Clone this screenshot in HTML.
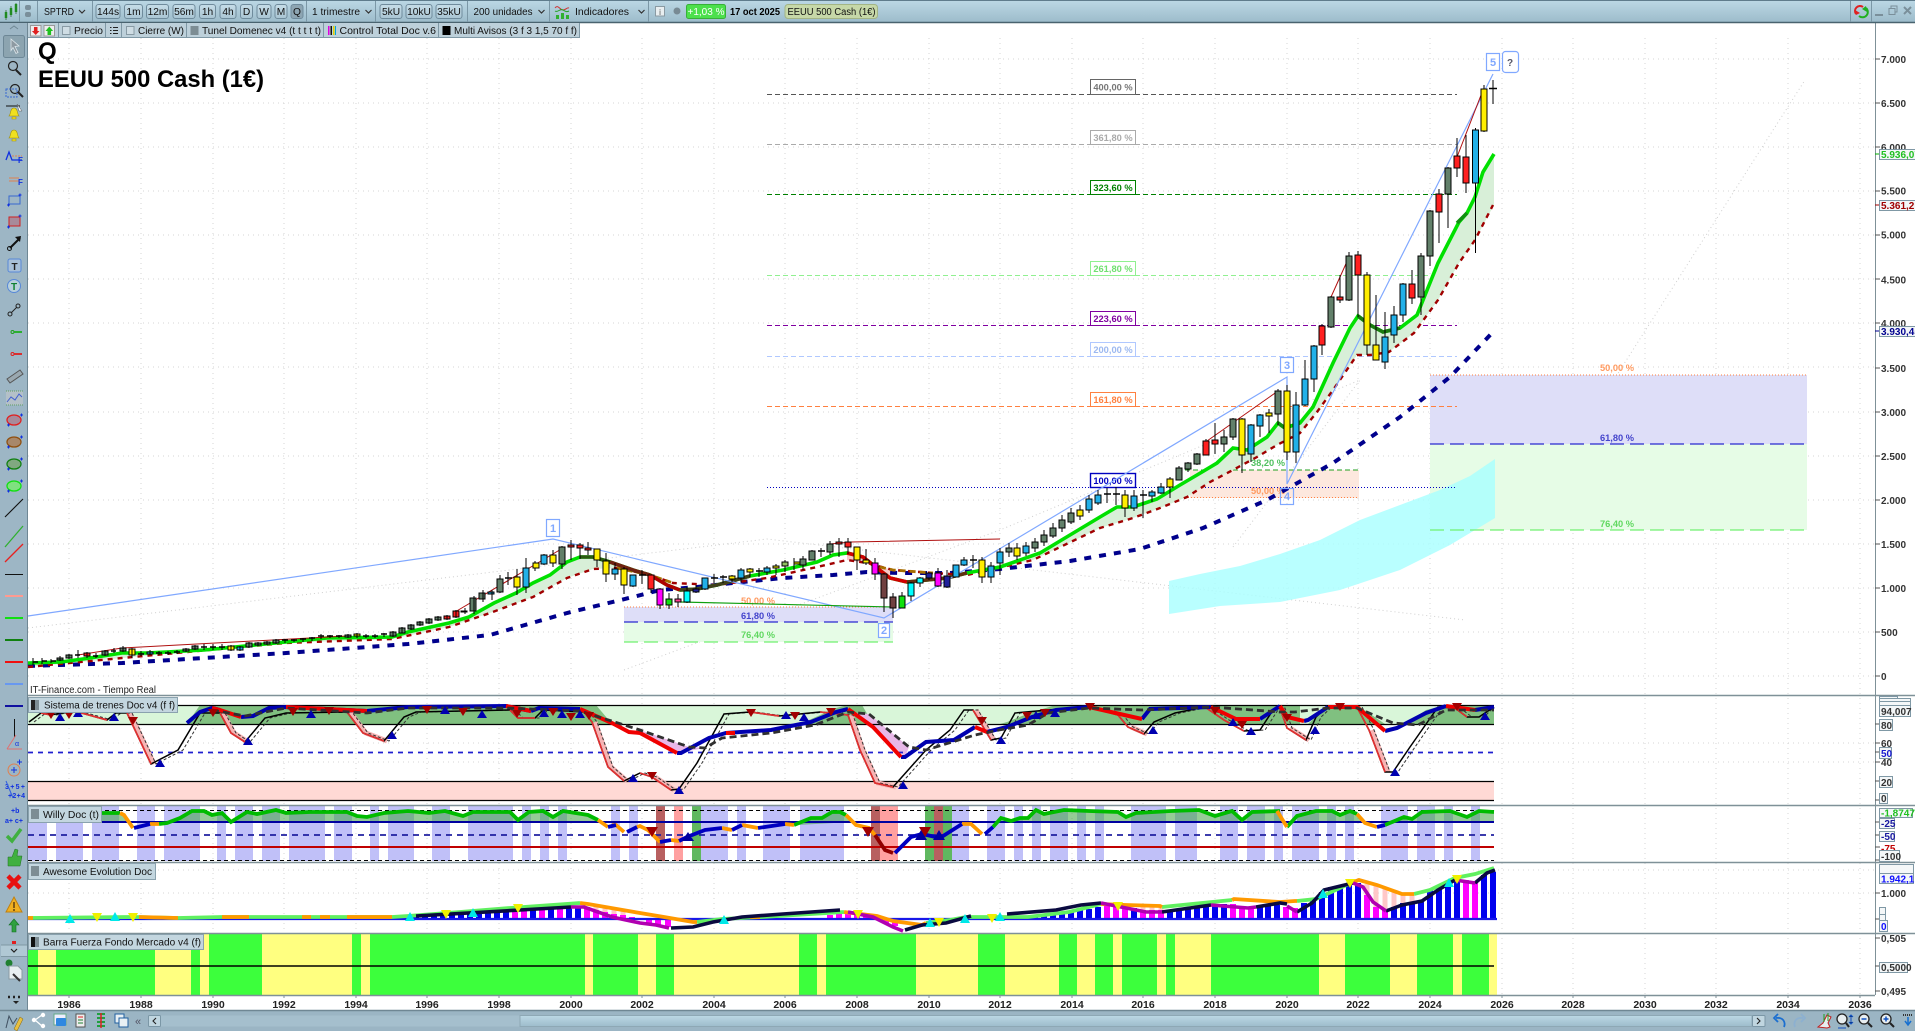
<!DOCTYPE html>
<html><head><meta charset="utf-8"><title>EEUU 500 Cash</title>
<style>
html,body{margin:0;padding:0;background:#fff;width:1915px;height:1031px;overflow:hidden}
svg{display:block;font-family:"Liberation Sans",Arial,sans-serif}
.tb{font-size:10.2px;fill:#111}
.ax{font-size:10px;font-weight:bold;fill:#333}
.yr{font-size:10.5px;font-weight:bold;fill:#222;text-anchor:middle}
.fl{font-size:9.3px;font-weight:bold;text-anchor:middle}
</style></head><body>
<svg width="1915" height="1031" viewBox="0 0 1915 1031" xmlns="http://www.w3.org/2000/svg">
<defs>
<linearGradient id="bar" x1="0" y1="0" x2="0" y2="1"><stop offset="0" stop-color="#bcd8e5"/><stop offset="1" stop-color="#9dbccb"/></linearGradient>
<linearGradient id="btn" x1="0" y1="0" x2="0" y2="1"><stop offset="0" stop-color="#c6dde8"/><stop offset="1" stop-color="#a9c5d3"/></linearGradient>
</defs>
<rect width="1915" height="1031" fill="#fff"/>

<!-- grid -->
<path d="M28 59H1875M28 103H1875M28 147H1875M28 191H1875M28 235H1875M28 279H1875M28 323H1875M28 367H1875M28 412H1875M28 456H1875M28 500H1875M28 544H1875M28 588H1875M28 632H1875M28 676H1875M28 743H1875M28 762H1875M28 870H1875M28 893H1875" stroke="#d4d4d4" stroke-dasharray="1 4" fill="none"/>
<path d="M69 38V995M141 38V995M213 38V995M284 38V995M356 38V995M427 38V995M499 38V995M571 38V995M642 38V995M714 38V995M785 38V995M857 38V995M929 38V995M1000 38V995M1072 38V995M1143 38V995M1215 38V995M1287 38V995M1358 38V995M1430 38V995M1502 38V995M1573 38V995M1645 38V995M1716 38V995M1788 38V995M1860 38V995" stroke="#d4d4d4" stroke-dasharray="1 4" fill="none"/>

<!-- faint dotted trend lines -->
<path d="M28 628L767 539L1465 620M624 670L1000 530L1360 380M1233 547L1360 380M1601 400L1805 80" stroke="#cfcfcf" stroke-dasharray="1 3" fill="none"/>

<!-- right fib zones -->
<rect x="1430" y="375" width="377" height="69" fill="#dedef8"/>
<rect x="1430" y="444" width="377" height="86" fill="#e6fce6"/>
<path d="M1169 581L1200 574 1240 566 1280 554 1320 540 1360 520 1400 505 1440 490 1470 476 1495 459V518L1450 545 1400 570 1370 580 1340 590 1280 602 1220 606 1169 614Z" fill="#a8ffff" opacity=".8"/>
<path d="M1430 375H1807" stroke="#ff8040" stroke-dasharray="1 2"/>
<path d="M1430 444H1807" stroke="#2a2ad0" stroke-width="1.300" stroke-dasharray="14 6"/>
<path d="M1430 530H1807" stroke="#70f070" stroke-width="1.300" stroke-dasharray="14 6"/>
<text x="1617" y="371" class="fl" fill="#ff9a60">50,00 %</text>
<text x="1617" y="441" class="fl" fill="#4444cc">61,80 %</text>
<text x="1617" y="527" class="fl" fill="#60d860">76,40 %</text>

<!-- middle small fib zones -->
<rect x="624" y="607" width="269" height="15" fill="#dedef8"/>
<rect x="624" y="622" width="269" height="20" fill="#e6fce6"/>
<path d="M624 607H893" stroke="#ff8040" stroke-dasharray="1 2"/>
<path d="M624 622H893" stroke="#2a2ad0" stroke-width="1.200" stroke-dasharray="14 6"/>
<path d="M624 642H893" stroke="#70f070" stroke-width="1.200" stroke-dasharray="14 6"/>
<text x="758" y="604" class="fl" fill="#ff9a60">50,00 %</text>
<text x="758" y="619" class="fl" fill="#4444cc">61,80 %</text>
<text x="758" y="638" class="fl" fill="#60d860">76,40 %</text>
<rect x="1190" y="470" width="169" height="28" fill="#fde8de"/>
<path d="M1185 470H1359" stroke="#20a020" stroke-dasharray="5 3"/>
<path d="M1185 497.500H1359" stroke="#ff8040" stroke-dasharray="1 2"/>
<text x="1268" y="466" class="fl" fill="#50c060">38,20 %</text>
<text x="1268" y="494" class="fl" fill="#ff9a60">50,00 %</text>

<!-- fib lines -->
<path d="M767 94.500H1457" stroke="#555" stroke-dasharray="5 3"/>
<path d="M767 144.500H1457" stroke="#aaa" stroke-dasharray="5 3"/>
<path d="M767 194.500H1457" stroke="#008000" stroke-dasharray="5 3"/>
<path d="M767 275.500H1457" stroke="#90f090" stroke-dasharray="5 3"/>
<path d="M767 325.500H1457" stroke="#8000a0" stroke-dasharray="5 3"/>
<path d="M767 356.500H1457" stroke="#b0c8ff" stroke-dasharray="5 3"/>
<path d="M767 406.500H1457" stroke="#ff8040" stroke-dasharray="5 3"/>
<path d="M767 487.500H1457" stroke="#0000c0" stroke-dasharray="1 2"/>
<g fill="#fff" stroke-width="1">
<rect x="1090.500" y="79.500" width="45" height="15" stroke="#666"/>
<rect x="1090.500" y="130.500" width="45" height="14" stroke="#aaa"/>
<rect x="1090.500" y="180.500" width="45" height="14" stroke="#008000"/>
<rect x="1090.500" y="261.500" width="45" height="14" stroke="#90f090"/>
<rect x="1090.500" y="311.500" width="45" height="14" stroke="#8000a0"/>
<rect x="1090.500" y="342.500" width="45" height="14" stroke="#b0c8ff"/>
<rect x="1090.500" y="392.500" width="45" height="14" stroke="#ff8040"/>
<rect x="1090.500" y="473.500" width="45" height="14" stroke="#0000c0" stroke-width="1.400"/>
</g>
<text x="1113" y="90.500" class="fl" fill="#777">400,00 %</text>
<text x="1113" y="141" class="fl" fill="#aaa">361,80 %</text>
<text x="1113" y="191" class="fl" fill="#008000">323,60 %</text>
<text x="1113" y="272" class="fl" fill="#70e070">261,80 %</text>
<text x="1113" y="322" class="fl" fill="#8000a0">223,60 %</text>
<text x="1113" y="353" class="fl" fill="#9cb8f0">200,00 %</text>
<text x="1113" y="403" class="fl" fill="#ff8040">161,80 %</text>
<text x="1113" y="484" class="fl" fill="#0000c0">100,00 %</text>

<!-- band fill + MAs below candles -->
<path d="M28 663L61 662 90 658 122 653 147 653 204 650 286 642 327 638 392 637 408 632 449 623 469 617 494 603 516 593 533 583 550 575 567 562 580 557 593 557 610 562 617 568 593 569 567 578 533 597 490 613 449 627 392 639 286 643 122 658 28 667Z" fill="#d8efd8"/>
<path d="M847 553L863 557 877 568 890 578 893 570 867 563 847 560Z" fill="#f8c8c8"/>
<path d="M960 575L1000 567 1040 553 1070 535 1100 517 1117 507 1133 507 1157 499 1180 485 1197 475 1217 463 1233 448 1247 450 1267 437 1278 423 1285 428 1300 423 1313 407 1333 363 1350 328 1358 316 1370 325 1383 332 1400 328 1417 315 1438 263 1459 222 1467 213 1475 197 1483 172 1494 154V205L1475 240 1459 263 1438 300 1414 333 1389 352 1370 355 1357 355 1333 390 1317 412 1300 433 1277 445 1257 457 1233 470 1210 482 1187 497 1160 508 1133 518 1100 528 1033 560 967 575Z" fill="#d8efd8"/>

<!-- navy dashed MA -->
<path d="M28 666L122 663 286 653 408 644 490 635 567 613 633 597 660 590 697 587 733 583 783 578 833 575 867 572 900 573 950 573 1000 569 1070 561 1140 549 1203 528 1267 500 1333 463 1400 417 1450 377 1493 332" fill="none" stroke="#00008c" stroke-width="4" stroke-dasharray="7 8"/>
<!-- lower dashed -->
<path d="M28 667L122 658 286 643 392 639 449 627 490 613 533 597 567 578 593 569 617 568 650 575 673 583 717 585 767 578 817 567 847 560 867 563 893 570 933 573 967 575 1033 560 1100 528 1133 518 1160 508 1187 497 1210 482 1233 470 1257 457 1277 445 1300 433 1317 412 1333 390 1357 355 1370 355 1389 352 1414 333 1438 300 1459 263 1475 240 1493 205" fill="none" stroke="#a00000" stroke-width="2.400" stroke-dasharray="5 5"/>
<path d="M617 568L650 575 673 583M880 567L893 570 933 573" fill="none" stroke="#a87000" stroke-width="2.800" stroke-dasharray="6 4"/>
<!-- main green MA -->
<path d="M28 663L61 662 90 658 122 653 147 653 204 650 286 642 327 638 392 637 408 632 449 623 469 617 494 603 516 593 533 583 550 575 567 562 580 557 593 557 610 562 633 570 650 575 667 585 680 590 697 589 717 585 750 576 783 570 817 562 833 555 847 553 863 557 877 568 890 578 907 582 927 580 947 578 967 573 983 570 1000 567 1040 553 1070 535 1100 517 1117 507 1133 507 1157 499 1180 485 1197 475 1217 463 1233 448 1247 450 1267 437 1278 423 1285 428 1300 423 1313 407 1333 363 1350 328 1358 316 1370 325 1383 332 1400 328 1417 315 1438 263 1459 222 1467 213 1475 197 1483 172 1494 154" fill="none" stroke="#00e000" stroke-width="3.600"/>
<path d="M580 557L593 557 610 562" fill="none" stroke="#2a5a10" stroke-width="3.600"/>
<path d="M610 562L633 570 650 575" fill="none" stroke="#702010" stroke-width="3.600"/>
<path d="M650 575L667 585 680 590" fill="none" stroke="#b00000" stroke-width="3.600"/>
<path d="M680 590L697 589 717 585 750 576" fill="none" stroke="#40401a" stroke-width="3.600"/>
<path d="M847 553L863 557 877 568 890 578 907 582" fill="none" stroke="#d00000" stroke-width="3.600"/>
<path d="M907 582L927 580 947 578 967 573" fill="none" stroke="#603010" stroke-width="3.600"/>
<path d="M1358 316L1370 325 1383 332 1400 328" fill="none" stroke="#1a7a10" stroke-width="3.600"/>
<path d="M1278 423L1285 428M1457 223L1467 213" fill="none" stroke="#109010" stroke-width="3.600"/>

<!-- waves -->
<path d="M28 616L553 539 884 618 1287 377V484L1493 74" fill="none" stroke="#80a8ff" stroke-width="1.200"/>
<!-- red/green swing -->
<path d="M78 655L122 648 347 636M455 612L563 548M830 544L851 542 1000 539M1207 441L1278 391M1331 297L1349 257M1457 157L1483 90" fill="none" stroke="#b01010" stroke-width="1"/>
<path d="M680 602L893 607" fill="none" stroke="#10a010" stroke-width="1.200"/>

<!-- wicks -->
<path d="M1493 80V104M1484 85V132M1475.500 128V253M1466 135V193M1457 138V177M1448 167V228M1439 189V243M1430 210V266M1421 253V315M1412 270V304M1403 283V322M1394 306V343M1385 312V369M1376 295V360M1367 272V355M1358 251V317M1349 252V301M1340 275V303M1331 296V328M1322 324V355M1314 345V392M1305 360V406M1296 392V463M1287 385V460M1278 389V425M1269 409V433M1260 414V437M1251 424V462M1242 418V473M1233 418V440M1224 430V452M1215 423V454M1206 439V455M1197 453V465M1188 462V472M1179 466V480M1170 477V498M1161 483V494M1152 490V502M1143 490V518M1134 490V511M1125 490V517M1116 487V505M1107 488V503M1098 490V505M1089 495V513M1080 505V520M1071 508V524M1062 515V532M1053 523V538M1044 530V546M1035 538V552M1026 542V556M1017 543V560M1009 543V557M1000 548V575M991 562V583M982 557V583M973 555V568M964 557V566M956 565V577M947 570V588M938 568V587M929 573V580M920 577V587M911 582V601M902 592V608M893 593V618M884 573V612M875 558V580M866 549V565M857 547V570M848 538V554M839 538V557M830 541V555M821 548V557M812 550V560M803 556V570M794 558V570M785 560V572M776 564V575M767 566V575M759 568V577M750 568V577M741 568V582M732 575V582M723 575V583M714 574V583M705 578V590M696 585V593M687 587V603M678 594V607M669 593V609M660 588V609M651 575V593M642 570V584M633 575V587M624 567V594M615 563V580M606 553V582M597 549V567M588 542V555M580 543V559M571 540V560M562 546V569M553 550V567M544 554V565M535 561V571M526 558V593M517 569V595M508 572V585M500 575V593" stroke="#000" fill="none"/>

<!-- bodies -->
<g stroke="#000" stroke-width="1">
<path fill="#ffee00" d="M1481 89h6v42h-6zM1373 345h6v15h-6zM1364 275h6v70h-6zM1284 391h6v61h-6zM1266 413h6v3h-6zM1239 419h6v36h-6zM1167 479h6v8h-6zM1122 495h6v13h-6zM1077 510h6v6h-6zM1014 548h6v8h-6zM979 560h6v17h-6zM854 547h6v13h-6zM863 560h6v3h-6zM794 562h6v2h-6zM773 566h6v2h-6zM747 569h6v3h-6zM729 576h6v3h-6zM621 569h6v16h-6zM603 561h6v13h-6zM594 549h6v11h-6zM550 555h6v8h-6zM514 577h6v10h-6zM533 563h6v5h-6z"/>
<path fill="#22b0e8" d="M1472.500 130h6v53h-6zM1400 284h6v31h-6zM1391 315h6v20h-6zM1382 337h6v25h-6zM1311 346h6v33h-6zM1302 379h6v26h-6zM1293 405h6v47h-6zM1257 415h6v11h-6zM1248 425h6v29h-6zM1158 487h6v6h-6zM1149 492h6v4h-6zM1131 496h6v12h-6zM1095 495h6v8h-6zM1086 499h6v11h-6zM1023 546h6v7h-6zM997 552h6v11h-6zM988 566h6v11h-6zM961 560h6v5h-6zM953 565h6v12h-6zM764 568h6v4h-6zM738 570h6v8h-6zM702 578h6v11h-6zM630 575h6v11h-6zM612 569h6v5h-6zM541 555h6v9h-6zM523 568h6v19h-6z"/>
<path fill="#ff2020" d="M1463 157h6v26h-6zM1454 156h6v12h-6zM1436 194h6v18h-6zM1409 284h6v14h-6zM1355 255h6v20h-6zM1337 297h6v3h-6zM1319 326h6v19h-6zM1212 440h6v4h-6zM1203 441h6v14h-6zM845 542h6v5h-6zM836 542h6v2h-6zM648 575h6v14h-6zM585 548h6v2h-6zM577 545h6v3h-6zM568 545h6v2h-6z"/>
<path fill="#62806a" d="M1445 168h6v26h-6zM1427 211h6v45h-6zM1418 256h6v41h-6zM1346 256h6v44h-6zM1328 297h6v30h-6zM1275 391h6v23h-6zM1230 419h6v18h-6zM1221 437h6v7h-6zM1194 454h6v10h-6zM1185 463h6v6h-6zM1176 468h6v12h-6zM1068 513h6v9h-6zM1059 520h6v8h-6zM1050 528h6v8h-6zM1041 535h6v7h-6zM1032 542h6v6h-6zM1006 548h6v4h-6zM827 544h6v8h-6zM809 551h6v9h-6zM800 559h6v6h-6zM559 547h6v17h-6zM497 579h6v13h-6z"/>
<path fill="#ff00ff" d="M657 589h6v16h-6zM872 563h6v11h-6zM935 573h6v13h-6z"/>
<path fill="#ff4090" d="M675 599h6v3h-6z"/>
<path fill="#10e010" d="M666 599h6v6h-6zM899 596h6v12h-6z"/>
<path fill="#90c060" d="M782 562h6v4h-6z"/>
<path fill="#00ffff" d="M684 591h6v11h-6zM908 583h6v13h-6zM917 578h6v5h-6z"/>
<path fill="#20209a" d="M693 589h6v3h-6zM926 573h6v5h-6zM944 576h6v11h-6z"/>
<path fill="#704040" d="M881 574h6v24h-6zM890 597h6v11h-6z"/>
<!-- early small candles -->
<path fill="#62806a" d="M66 655h6v3h-6zM57 658h6v2h-6zM102 651h6v4h-6zM120 648h6v3h-6zM183 649h6v2h-6zM192 646h6v3h-6zM246 643h6v4h-6zM255 643h6v2h-6zM264 642h6v2h-6zM273 640h6v3h-6zM345 635h6v2h-6zM390 632h6v4h-6zM399 628h6v5h-6zM408 625h6v4h-6zM417 622h6v3h-6zM426 619h6v4h-6zM435 617h6v3h-6zM461 611h6v1h-6zM470 598h6v13h-6zM479 593h6v6h-6z"/>
<path fill="#ff2020" d="M84 653h6v3h-6zM453 611h6v6h-6zM444 616h6v3h-6z"/>
<path fill="#ffee00" d="M129 649h6v6h-6zM228 646h6v4h-6zM354 634h6v2h-6z"/>
<path fill="#22b0e8" d="M147 652h6v2h-6zM237 647h6v3h-6zM488 592h6v2h-6z"/>
</g>
<path d="M33 662h5M42 661h5M51 661h5M75 655h5M93 656h5M111 651h5M138 654h6M156 653h6M165 653h6M174 652h6M201 647h6M210 647h6M219 647h6M282 640h6M291 640h6M300 639h6M309 638h6M318 636h6M327 636h6M336 636h6M363 636h6M372 636h6M381 634h6M1140 495h7M1113 494h7M1104 494h7M1489 88.500h8M970 560h7M818 551h7M756 571h7M711 578h7M720 577h7M639 575h7M505 578h7" stroke="#000" stroke-width="1.600" fill="none"/>
<path d="M33 658V665M42 658V664M51 659V663M60 656V661M69 654V659M78 650V658M87 652V658M96 653V658M105 650V656M114 648V653M123 646V652M132 648V658M141 651V656M150 650V655M159 651V655M168 651V655M177 650V654M186 648V652M195 645V650M204 644V650M213 644V650M222 644V650M231 645V651M240 646V651M249 642V648M258 642V646M267 641V645M276 639V644M285 639V643M294 639V642M303 638V642M312 637V641M321 634V639M330 635V638M339 635V638M348 634V638M357 633V638M366 634V638M375 634V638M384 633V637M393 631V637M402 627V633M411 624V630M420 621V626M429 618V624M438 616V621M447 615V620M456 610V618M465 608V614M474 596V614M483 590V602M492 590V600" stroke="#000" fill="none"/>

<!-- wave labels -->
<g fill="#fff" stroke="#80a8ff" stroke-width="1.200">
<rect x="546.500" y="519.500" width="13" height="17"/><rect x="878.500" y="623.500" width="11" height="14"/><rect x="1280.500" y="357.500" width="13" height="15"/><rect x="1280.500" y="488.500" width="13" height="16" fill="none"/><rect x="1486.500" y="53.500" width="13" height="17"/><rect x="1502.500" y="51.500" width="16" height="21" rx="3"/>
</g>
<g font-size="11" font-weight="bold" fill="#80a8ff" text-anchor="middle">
<text x="553" y="532">1</text><text x="884" y="634">2</text><text x="1287" y="369">3</text><text x="1287" y="500">4</text><text x="1493" y="66">5</text></g>
<text x="1510" y="66" font-size="10" font-weight="bold" fill="#556" text-anchor="middle">?</text>

<!-- title -->
<text x="38" y="59" font-size="24" font-weight="bold" fill="#000">Q</text>
<text x="38" y="87" font-size="24" font-weight="bold" fill="#000" textLength="226" lengthAdjust="spacingAndGlyphs">EEUU 500 Cash (1€)</text>
<text x="30" y="693" font-size="10" fill="#222" textLength="126" lengthAdjust="spacingAndGlyphs">IT-Finance.com - Tiempo Real</text>

<!-- SISTEMA panel -->
<rect x="28" y="705" width="1466" height="19" fill="#d9f6d9"/>
<rect x="28" y="781" width="1466" height="19" fill="#ffd9d5"/>
<path fill="#80c080" d="M187 724L200 705H596L612 724ZM800 724L836 708 848 705 862 705 873 724ZM1000 724L1007 722 1032 712 1056 705H1280V724ZM1275 705h25v19h-25zM1308 724L1328 705H1357L1385 724ZM1405 724L1426 710 1446 705H1494V724Z"/>
<path d="M640 730L689 747 705 748 677 753 640 733ZM848 712L869 714 909 747 905 757 873 727 848 709Z" fill="#e8b8e8"/>
<path d="M28 705.500H1494M28 724.500H1494M28 781.500H1494M28 800.500H1494" stroke="#000" stroke-width="1.200"/>
<path d="M28 752.500H1494" stroke="#2020d0" stroke-width="1.800" stroke-dasharray="5 5"/>
<!-- k red pale halos -->
<g transform="translate(3,0)" fill="none" stroke="#f6b4b4" stroke-width="5"><path d="M127 713L151 764M220 713L231 733 245 742M347 712L363 733 384 741M592 722L608 767 624 781M652 777L671 790M848 715L860 750 875 783 893 787M973 710L991 740M1128 727L1144 734M1287 728L1306 740M1369 730L1385 772"/></g>
<g transform="translate(5,0)" fill="none" stroke="#333" stroke-dasharray="3 2"><path d="M29 722L41 713 51 715 61 713 78 712 107 720 116 713 127 713 151 764 178 750 200 713 220 713 231 733 245 742 265 718 286 713 347 712 363 733 384 741 404 717 416 712 510 710 518 718 535 718 543 710 584 712 592 722 608 767 624 781 640 773 652 777 671 790 679 789 697 763 724 714 750 712 779 716 820 712 848 715 860 750 875 783 893 787 926 750 950 730 964 710 973 710 991 740 1001 738 1015 713 1048 710 1089 707 1118 715 1128 727 1144 734 1154 722 1175 713 1205 707 1224 720 1244 731 1260 730 1273 710 1280 708 1287 728 1306 740 1316 717 1328 706 1357 707 1369 730 1385 772 1393 772 1410 747 1438 707 1455 708 1467 717 1479 717 1489 707"/></g>
<path d="M29 722L41 713 51 715 61 713 78 712 107 720 116 713 127 713 151 764 178 750 200 713 220 713 231 733 245 742 265 718 286 713 347 712 363 733 384 741 404 717 416 712 510 710 518 718 535 718 543 710 584 712 592 722 608 767 624 781 640 773 652 777 671 790 679 789 697 763 724 714 750 712 779 716 820 712 848 715 860 750 875 783 893 787 926 750 950 730 964 710 973 710 991 740 1001 738 1015 713 1048 710 1089 707 1118 715 1128 727 1144 734 1154 722 1175 713 1205 707 1224 720 1244 731 1260 730 1273 710 1280 708 1287 728 1306 740 1316 717 1328 706 1357 707 1369 730 1385 772 1393 772 1410 747 1438 707 1455 708 1467 717 1479 717 1494 707" fill="none" stroke="#000" stroke-width="1.500"/>
<path d="M41 713L51 715M78 712L107 720M127 713L151 764M220 713L231 733 245 742M347 712L363 733 384 741M510 710L518 718 535 718M584 712L592 722 608 767 624 781M640 773L652 777 671 790M750 712L779 716M820 712L848 715 860 750 875 783 893 787M973 710L991 740M1089 707L1118 715 1128 727 1144 734M1205 707L1224 720 1244 731M1280 708L1287 728 1306 740M1357 707L1369 730 1385 772M1455 708L1467 717" fill="none" stroke="#e03030" stroke-width="1.700"/>
<!-- thick -->
<path d="M187 723L200 712 212 708 220 710M241 717L253 716 269 708 286 707 367 711 408 707 506 706 531 711M531 711L539 708 580 709M677 753L681 753 709 738 726 733 771 730 811 722 836 712 848 709M901 757L905 757 926 742 954 740 975 727M987 732L1007 727 1032 717 1056 710 1089 707M1142 719L1150 709 1211 707M1260 719L1280 706M1304 721L1308 720 1328 707M1385 731L1397 728 1426 713 1446 706M1475 710L1494 707" fill="none" stroke="#0000b0" stroke-width="4"/>
<path d="M212 708L220 710 241 717M286 707L367 711 347 710M506 706L531 711M580 709L612 723 629 732 640 733 677 753M726 733L735 733M848 709L873 727 901 757M975 727L987 732M1089 707L1142 719M1211 707L1236 719 1260 719M1280 706L1287 717 1304 721M1328 707L1357 707 1385 731M1446 706L1475 710" fill="none" stroke="#f00000" stroke-width="4"/>
<path d="M212 710L245 716 286 708 367 713 408 708 506 708 580 711 640 730 689 747 705 748 722 738 771 733 815 725 848 712 869 714 909 747 926 750 975 735 999 730 1028 725 1048 713 1089 708 1142 710 1211 707 1280 712 1295 712 1328 708 1357 708 1393 723 1418 725 1446 710 1494 710" fill="none" stroke="#303030" stroke-width="2.800" stroke-dasharray="7 4"/>
<path fill="#0000b0" d="M60 713l-5 8h10zM78 709l-5 8h10zM114 713l-5 8h10zM160 759l-5 8h10zM248 737l-5 8h10zM311 710l-5 8h10zM392 731l-5 8h10zM445 706l-5 8h10zM482 710l-5 8h10zM544 709l-5 8h10zM562 710l-5 8h10zM580 710l-5 8h10zM633 774l-5 8h10zM679 786l-5 8h10zM786 711l-5 8h10zM804 713l-5 8h10zM903 781l-5 8h10zM1001 736l-5 8h10zM1036 711l-5 8h10zM1055 709l-5 8h10zM1153 726l-5 8h10zM1233 718l-5 8h10zM1251 727l-5 8h10zM1315 726l-5 8h10zM1395 768l-5 8h10zM1485 712l-5 8h10z"/>
<path fill="#a00000" d="M51 719l-5-8h10zM69 719l-5-8h10zM133 725l-5-8h10zM213 717l-5-8h10zM293 716l-5-8h10zM329 715l-5-8h10zM427 714l-5-8h10zM463 716l-5-8h10zM517 718l-5-8h10zM553 716l-5-8h10zM571 721l-5-8h10zM589 720l-5-8h10zM652 780l-5-8h10zM751 717l-5-8h10zM795 720l-5-8h10zM831 716l-5-8h10zM982 725l-5-8h10zM1027 720l-5-8h10zM1045 717l-5-8h10zM1090 711l-5-8h10zM1215 715l-5-8h10zM1242 729l-5-8h10zM1287 722l-5-8h10zM1340 711l-5-8h10zM1457 711l-5-8h10z"/>

<!-- WILLY panel -->
<g fill="#c0c0f8"><path d="M28 806h19v55h-19zM56 806h27v55h-27zM92 806h27v55h-27zM137 806h18v55h-18zM164 806h36v55h-36zM217 806h9v55h-9zM235 806h18v55h-18zM262 806h18v55h-18zM289 806h36v55h-36zM334 806h18v55h-18zM370 806h9v55h-9zM388 806h26v55h-26zM432 806h18v55h-18zM468 806h45v55h-45zM522 806h9v55h-9zM540 806h9v55h-9zM558 806h9v55h-9zM611 806h9v55h-9zM629 806h9v55h-9zM701 806h27v55h-27zM737 806h9v55h-9zM763 806h27v55h-27zM800 806h44v55h-44zM952 806h17v55h-17zM987 806h18v55h-18zM1014 806h9v55h-9zM1032 806h9v55h-9zM1050 806h18v55h-18zM1077 806h9v55h-9zM1095 806h9v55h-9zM1131 806h35v55h-35zM1175 806h22v55h-22zM1220 806h18v55h-18zM1247 806h18v55h-18zM1274 806h9v55h-9zM1292 806h27v55h-27zM1327 806h9v55h-9zM1345 806h9v55h-9zM1381 806h27v55h-27zM1417 806h18v55h-18zM1444 806h9v55h-9zM1471 806h9v55h-9z"/></g>
<path fill="#b86060" d="M656 806h9v55h-9zM871 806h9v55h-9zM934 806h9v55h-9z"/>
<path fill="#ffa0a0" d="M674 806h9v55h-9zM880 806h18v55h-18z"/>
<path fill="#60b860" d="M692 806h9v55h-9zM925 806h9v55h-9zM943 806h9v55h-9z"/>
<!-- green overlay -->
<path d="M102 822V813L120 813 128 822ZM167 822L180 818 192 811 204 811 212 815 222 813 231 822 247 812 257 814 276 810 286 813 310 812 347 812 357 816 367 817 384 813 408 811 429 813 445 811 463 816 473 812 510 812 518 820 529 812 543 811 553 817 563 811 588 815 598 822ZM797 825L811 818 822 818 832 812 840 812 846 815 852 822ZM1001 822L1011 821 1020 818 1028 818 1036 810 1044 814 1064 810 1089 811 1118 812 1126 817 1136 813 1171 811 1199 810 1215 816 1232 811 1242 820 1252 812 1280 811 1285 822ZM1297 822V816L1316 811 1332 811 1340 815 1350 811 1357 814 1362 822ZM1392 822L1404 817 1412 819 1422 812 1450 811 1467 817 1479 811 1494 812V822Z" fill="#40a040" opacity=".55"/>
<path d="M28 810.500H1494M28 860.500H1494" stroke="#000" stroke-dasharray="4 3"/>
<path d="M28 822H1494" stroke="#0000a0" stroke-width="2"/>
<path d="M28 835H1494" stroke="#2020a0" stroke-width="1.800" stroke-dasharray="6 5"/>
<path d="M28 847H1494" stroke="#c00000" stroke-width="2"/>
<g fill="none" stroke-width="3.800">
<path stroke="#00bb00" d="M102 813L120 813M159 824L167 823 180 818 192 811 204 811 212 815 222 813 231 822 247 812 257 814 276 810 286 813 310 812 347 812 357 816 367 817 384 813 408 811 429 813 445 811 463 816 473 812 510 812 518 820 529 812 543 811 553 817 563 811 588 815 598 820M794 825L811 818 822 818 832 812 840 812 846 815M993 827L1001 818 1011 821 1020 818 1028 818 1036 810 1044 814 1064 810 1089 811 1118 812 1126 817 1136 813 1171 811 1199 810 1215 816 1232 811 1242 820 1252 812 1280 811M1287 827L1297 816 1316 811 1332 811 1340 815 1350 811 1357 814M1385 825L1404 817 1412 819 1422 812 1450 811 1467 817 1479 811 1494 812"/>
<path stroke="#ff9900" d="M120 813L124 815 133 828M150 824L159 824M598 820L608 827M612 825L616 825 624 832M637 827L640 826 648 830 660 842M671 840L679 841M722 828L732 830M742 825L758 828M785 824L794 825M846 815L856 825 869 828 875 835M962 824L971 824 982 834M1277 811L1287 827M1357 814L1365 823 1377 827"/>
<path stroke="#0000c0" d="M134 828L150 824M608 827L616 825M627 832L637 827M660 842L671 840M679 841L687 837 705 830 722 828M732 830L742 825M758 828L785 824M895 853L911 837 922 834 940 838 962 824M985 834L993 827M1377 827L1385 825"/>
<path stroke="#900000" d="M875 835L885 850 893 853"/>
</g>
<path fill="#a00000" d="M652 840l-6-10h12zM868 840l-6-10h12zM925 840l-6-10h12z" transform="translate(0,-3)"/>
<path fill="#0000a0" d="M688 832l-6 9h12zM921 830l-6 10h12zM939 830l-6 10h12z"/>

<!-- AWESOME panel -->
<path d="M416 919V917M425 919V916M434 919V916M443 919V915M452 919V914M461 919V914M470 919V913M479 919V912M488 919V911M497 919V911M506 919V911M533 919V908M551 919V908M569 919V907M578 919V907M703 919V922M992 919V918M1001 919V918M1010 919V917M1017 919V917M1026 919V916M1035 919V915M1044 919V914M1053 919V913M1062 919V912M1071 919V911M1080 919V910M1089 919V909M1098 919V907M1134 919V908M1170 919V910M1179 919V909M1188 919V909M1197 919V908M1206 919V906M1215 919V904M1224 919V904M1260 919V906M1268 919V905M1277 919V905M1304 919V903M1313 919V900M1322 919V892M1331 919V887M1340 919V885M1349 919V883M1358 919V883M1394 919V907M1403 919V903M1412 919V902M1421 919V901M1430 919V890M1439 919V887M1448 919V883M1457 919V882M1493 919V872M1484 919V875" stroke="#0000ee" stroke-width="6" fill="none"/>
<path d="M515 919V910M524 919V909M542 919V909M560 919V908M587 919V907M596 919V910M605 919V912M614 919V914M623 919V915M632 919V917M649 919V925M658 919V926M668 919V927M830 919V915M839 919V912M848 919V912M857 919V914M866 919V915M875 919V917M886 919V923M895 919V926M1107 919V906M1116 919V906M1125 919V907M1143 919V910M1152 919V910M1161 919V910M1233 919V904M1242 919V907M1251 919V908M1286 919V907M1295 919V908M1367 919V895M1376 919V907M1385 919V910M1466 919V880M1475 919V883" stroke="#ff00ff" stroke-width="6" fill="none"/>
<path d="M1367 895V884M1376 907V886M1385 910V889M1394 907V892M1403 903V894M1412 902V895M1143 910V906M1152 910V906M1161 910V907M596 910V906M605 912V907M614 914V909M623 915V910" stroke="#ffc8c8" stroke-width="5" fill="none"/>
<path d="M28 919H1497" stroke="#1818e8" stroke-width="2.200"/>
<path d="M28 918L135 917 178 918 222 917 392 917 408 916 460 912 510 908 580 903M697 922L722 919 762 917 844 912M926 923L950 920 966 917 1028 917 1069 912 1101 904M1162 907L1232 900M1297 901L1316 899 1353 882M1414 894L1430 890 1455 878 1475 874 1494 868" fill="none" stroke="#60f060" stroke-width="3.800"/>
<path d="M28 918h5M139 917L178 918M222 917L249 917M302 917h9M320 917h10M347 917L392 917M750 917h10M580 903L588 904 640 913 664 917 693 922 697 922M844 912L852 913 877 916 893 921 922 925 926 923M1101 904L1126 905 1160 906 1162 907M1232 900L1234 899 1280 902 1295 901 1297 901M1353 882L1359 880 1377 885 1402 894 1412 894 1414 894" fill="none" stroke="#ff9900" stroke-width="3.800"/>
<path d="M416 916L520 910 571 907M671 928L693 927 713 922 742 917 783 914 840 910M905 930L922 925 946 923 971 916M1007 914L1056 910 1081 905 1101 903M1162 912L1211 905M1256 907L1280 903 1287 904M1297 912L1312 903 1324 890 1353 883M1386 911L1402 905 1422 901 1438 890 1455 880M1475 883L1487 873 1495 870" fill="none" stroke="#0a0a40" stroke-width="3.600"/>
<path d="M571 907L584 907 612 917 640 923 656 925 669 928M848 912L873 917 893 927 903 931M1101 903L1126 908 1146 912 1162 912M1211 905L1248 908 1256 907M1287 906L1297 912M1353 883L1363 887 1373 902 1386 911M1455 880L1475 883" fill="none" stroke="#b000b0" stroke-width="3.600"/>
<path fill="#00e8e8" d="M70 914l-5 9h10zM115 912l-5 9h10zM410 912l-5 9h10zM473 908l-5 9h10zM724 915l-5 9h10zM930 918l-5 9h10zM965 914l-5 9h10zM1000 912l-5 9h10zM1323 889l-5 9h10zM1449 878l-5 9h10z"/>
<path fill="#f0f000" d="M97 922l-5-9h10zM133 922l-5-9h10zM446 919l-5-9h10zM518 913l-5-9h10zM858 919l-5-9h10zM939 927l-5-9h10zM992 923l-5-9h10zM1118 911l-5-9h10zM1350 888l-5-9h10zM1457 884l-5-9h10z"/>

<!-- BARRA panel -->
<rect x="28" y="934" width="1469" height="61" fill="#3cff3c"/>
<path fill="#ffff80" d="M38 934h18v61h-18zM155 934h36v61h-36zM200 934h9v61h-9zM262 934h90v61h-90zM361 934h9v61h-9zM585 934h8v61h-8zM638 934h18v61h-18zM674 934h125v61h-125zM817 934h9v61h-9zM916 934h62v61h-62zM1005 934h54v61h-54zM1077 934h18v61h-18zM1113 934h9v61h-9zM1157 934h9v61h-9zM1175 934h36v61h-36zM1319 934h26v61h-26zM1390 934h27v61h-27zM1453 934h9v61h-9zM1489 934h8v61h-8z"/>
<path d="M28 966H1494" stroke="#000" stroke-width="1.400"/>

<!-- separators -->
<path d="M28 695.500H1915M28 805.500H1915M28 862.500H1915M28 933.500H1915M28 995.500H1875" stroke="#7f9198" stroke-width="1.400"/>
<path d="M1875.500 23V995" stroke="#7f9198"/>

<!-- time axis -->
<g>
<text x="69" y="1008" class="yr">1986</text><text x="141" y="1008" class="yr">1988</text><text x="213" y="1008" class="yr">1990</text><text x="284" y="1008" class="yr">1992</text><text x="356" y="1008" class="yr">1994</text><text x="427" y="1008" class="yr">1996</text><text x="499" y="1008" class="yr">1998</text><text x="571" y="1008" class="yr">2000</text><text x="642" y="1008" class="yr">2002</text><text x="714" y="1008" class="yr">2004</text><text x="785" y="1008" class="yr">2006</text><text x="857" y="1008" class="yr">2008</text><text x="929" y="1008" class="yr">2010</text><text x="1000" y="1008" class="yr">2012</text><text x="1072" y="1008" class="yr">2014</text><text x="1143" y="1008" class="yr">2016</text><text x="1215" y="1008" class="yr">2018</text><text x="1287" y="1008" class="yr">2020</text><text x="1358" y="1008" class="yr">2022</text><text x="1430" y="1008" class="yr">2024</text><text x="1502" y="1008" class="yr">2026</text><text x="1573" y="1008" class="yr">2028</text><text x="1645" y="1008" class="yr">2030</text><text x="1716" y="1008" class="yr">2032</text><text x="1788" y="1008" class="yr">2034</text><text x="1860" y="1008" class="yr">2036</text>
</g>
<path d="M69 995v3M141 995v3M213 995v3M284 995v3M356 995v3M427 995v3M499 995v3M571 995v3M642 995v3M714 995v3M785 995v3M857 995v3M929 995v3M1000 995v3M1072 995v3M1143 995v3M1215 995v3M1287 995v3M1358 995v3M1430 995v3M1502 995v3M1573 995v3M1645 995v3M1716 995v3M1788 995v3M1860 995v3" stroke="#7f9198"/>

<!-- axis labels -->
<path d="M1875 59h5M1875 103h5M1875 147h5M1875 191h5M1875 235h5M1875 279h5M1875 323h5M1875 368h5M1875 412h5M1875 456h5M1875 500h5M1875 544h5M1875 588h5M1875 632h5M1875 676h5M1875 724h5M1875 743h5M1875 752h4M1875 762h5M1875 781h5M1875 800h5M1875 822h5M1875 835h5M1875 847h5M1875 860h5M1875 893h5M1875 919h5M1875 938h5M1875 966h5M1875 991h5" stroke="#555"/>
<path d="M1875 154h5" stroke="#00b000"/><path d="M1875 205h5" stroke="#a00000"/><path d="M1875 331h5" stroke="#000090"/>
<g>
<text x="1881" y="63" class="ax">7.000</text><text x="1881" y="107" class="ax">6.500</text><text x="1881" y="151" class="ax">6.000</text><text x="1881" y="194.500" class="ax">5.500</text><text x="1881" y="238.500" class="ax">5.000</text><text x="1881" y="283.500" class="ax">4.500</text><text x="1881" y="327" class="ax">4.000</text><text x="1881" y="372" class="ax">3.500</text><text x="1881" y="416" class="ax">3.000</text><text x="1881" y="460" class="ax">2.500</text><text x="1881" y="504" class="ax">2.000</text><text x="1881" y="548" class="ax">1.500</text><text x="1881" y="592" class="ax">1.000</text><text x="1881" y="636" class="ax">500</text><text x="1881" y="680" class="ax">0</text>
<text x="1881" y="747" class="ax">60</text><text x="1881" y="766" class="ax">40</text>
<text x="1881" y="852" class="ax" style="fill:#c00000">-75</text>
<text x="1881" y="897" class="ax">1.000</text>
<text x="1881" y="942" class="ax">0,505</text><text x="1881" y="995" class="ax">0,495</text>
</g>
<g fill="#f4f7f8" stroke="#7f98a5">
<rect x="1879.500" y="149.500" width="36" height="10"/><rect x="1879.500" y="200.500" width="36" height="10"/><rect x="1879.500" y="326.500" width="36" height="10"/>
<rect x="1879.500" y="696.500" width="18" height="4"/><rect x="1879.500" y="698.500" width="31" height="4"/><rect x="1879.500" y="701.500" width="31" height="4"/>
<rect x="1879.500" y="705.500" width="31" height="11"/><rect x="1879.500" y="719.500" width="13" height="11"/><rect x="1879.500" y="747.500" width="12" height="11"/><rect x="1879.500" y="776.500" width="13" height="11"/><rect x="1879.500" y="793.500" width="8" height="10"/>
<rect x="1879.500" y="808.500" width="33" height="9"/><rect x="1879.500" y="818.500" width="15" height="10"/><rect x="1879.500" y="831.500" width="15" height="10"/><rect x="1879.500" y="850.500" width="20" height="11"/>
<rect x="1879.500" y="864.500" width="34" height="9"/><rect x="1879.500" y="873.500" width="34" height="10"/><rect x="1879.500" y="907.500" width="6" height="7"/><rect x="1879.500" y="914.500" width="6" height="6"/><rect x="1879.500" y="920.500" width="8" height="11"/><rect x="1879.500" y="962.500" width="28" height="10"/>
</g>
<g>
<text x="1881" y="158" class="ax" style="fill:#20c020">5.936,07</text><text x="1881" y="209" class="ax" style="fill:#a00000">5.361,21</text><text x="1881" y="335" class="ax" style="fill:#000090">3.930,45</text>
<text x="1881" y="715" class="ax">94,007</text><text x="1881" y="729" class="ax">80</text><text x="1881" y="757" class="ax" style="fill:#1818d0">50</text><text x="1881" y="786" class="ax">20</text><text x="1881" y="802" class="ax">0</text>
<text x="1881" y="816.500" class="ax" style="fill:#20c020">-1,8747</text><text x="1881" y="827" class="ax" style="fill:#1818a0">-25</text><text x="1881" y="840" class="ax" style="fill:#1818a0">-50</text><text x="1881" y="860" class="ax">-100</text>
<text x="1881" y="882.500" class="ax" style="fill:#1010ff">1.942,1</text><text x="1881" y="930" class="ax" style="fill:#1010ff">0</text><text x="1881" y="971" class="ax">0,5000</text>
</g>

<!-- panel legends -->
<g fill="#c3d6df" stroke="#8aa2ae">
<rect x="28.500" y="697.500" width="149" height="15"/><rect x="28.500" y="806.500" width="73" height="16"/><rect x="28.500" y="863.500" width="127" height="16"/><rect x="28.500" y="934.500" width="175" height="15"/>
</g>
<path d="M31 700h4v10h-4z" fill="#222"/><path d="M35 700h4v10h-4z" fill="#7d8d94"/>
<path d="M31 809h8v10h-8zM31 866h8v10h-8z" fill="#7d8d94"/>
<path d="M31 937h4v10h-4z" fill="#111"/><path d="M35 937h4v10h-4z" fill="#7d8d94"/>
<g font-size="10" fill="#111">
<text x="44" y="708.500" textLength="131" lengthAdjust="spacingAndGlyphs">Sistema de trenes Doc v4 (f f)</text>
<text x="43" y="818" textLength="56" lengthAdjust="spacingAndGlyphs">Willy Doc (t)</text>
<text x="43" y="875" textLength="109" lengthAdjust="spacingAndGlyphs">Awesome Evolution Doc</text>
<text x="43" y="945.500" textLength="158" lengthAdjust="spacingAndGlyphs">Barra Fuerza Fondo Mercado v4 (f)</text>
</g>

<!-- TOP TOOLBAR -->
<rect x="0" y="0" width="1915" height="22" fill="url(#bar)"/>
<path d="M0 .5H1915" stroke="#5f7c8c"/>
<path d="M0 22.500H1915" stroke="#49636f" stroke-width="1.600"/>
<path d="M6 12v6M11 8v7M16 4v8" stroke="#20a020" stroke-width="2.500"/><path d="M6 10v10M11 6v11M16 3v11" stroke="#206020" stroke-width=".7"/>
<rect x="25" y="5" width="6" height="5" rx="2" fill="#7a8f9a"/><rect x="25" y="12" width="6" height="5" rx="2" fill="#7a8f9a"/>
<path d="M19.500 1V22M37.500 1V22M92.500 1V22M306.500 1V22M375.500 1V22M467.500 1V22M549.500 1V22M648.500 1V22M1850.500 1V22M1871.500 1V22" stroke="#7b97a6"/>
<g fill="url(#btn)" stroke="#6f8b9c">
<rect x="96" y="4.500" width="24" height="14" rx="2.500"/><rect x="124.500" y="4.500" width="18" height="14" rx="2.500"/><rect x="146.500" y="4.500" width="22" height="14" rx="2.500"/><rect x="173" y="4.500" width="22" height="14" rx="2.500"/><rect x="199.500" y="4.500" width="16" height="14" rx="2.500"/><rect x="220" y="4.500" width="16" height="14" rx="2.500"/><rect x="240.500" y="4.500" width="12" height="14" rx="2.500"/><rect x="257" y="4.500" width="14" height="14" rx="2.500"/><rect x="275" y="4.500" width="12" height="14" rx="2.500"/>
<rect x="291" y="4.500" width="12" height="14" rx="2.500" style="fill:#8da5b2"/>
<rect x="380" y="4.500" width="22" height="14" rx="2.500"/><rect x="406" y="4.500" width="26" height="14" rx="2.500"/><rect x="436" y="4.500" width="26" height="14" rx="2.500"/>
</g>
<g text-anchor="middle">
<text x="108" y="15" class="tb">144s</text><text x="133.500" y="15" class="tb">1m</text><text x="157.500" y="15" class="tb">12m</text><text x="184" y="15" class="tb">56m</text><text x="207.500" y="15" class="tb">1h</text><text x="228" y="15" class="tb">4h</text><text x="246.500" y="15" class="tb">D</text><text x="264" y="15" class="tb">W</text><text x="281" y="15" class="tb">M</text><text x="297" y="15" class="tb">Q</text><text x="391" y="15" class="tb">5kU</text><text x="419" y="15" class="tb">10kU</text><text x="449" y="15" class="tb">35kU</text>
</g>
<text x="44" y="15" class="tb" textLength="30" lengthAdjust="spacingAndGlyphs">SPTRD</text>
<text x="312" y="15" class="tb" textLength="48" lengthAdjust="spacingAndGlyphs">1 trimestre</text>
<text x="473.500" y="15" class="tb" textLength="59" lengthAdjust="spacingAndGlyphs">200 unidades</text>
<text x="575" y="15" class="tb" textLength="54" lengthAdjust="spacingAndGlyphs">Indicadores</text>
<path d="M79 10l3 3 3-3M365.500 10l3 3 3-3M538.500 10l3 3 3-3M638.500 10l3 3 3-3" fill="none" stroke="#333" stroke-width="1.200"/>
<path d="M555 8c3-4 5 2 8 2s4-3 6-2" stroke="#d03030" fill="none"/><path d="M555 11c3 2 5-3 8-1s4 2 6 1" stroke="#20a020" fill="none"/><path d="M556 15h3v4h-3zM561 13h3v6h-3zM566 15h3v4h-3z" fill="#30b030"/>
<rect x="655.500" y="6.500" width="9" height="9.500" fill="#e8eef0" stroke="#8a9aa2"/><text x="660" y="15" font-size="8" fill="#555" text-anchor="middle">i</text>
<circle cx="677" cy="11" r="3.500" fill="#788a94"/>
<rect x="686.500" y="4.500" width="39" height="14" rx="2" fill="#4ce04c" stroke="#38b038"/>
<text x="706" y="15" font-size="10" fill="#fff" text-anchor="middle">+1,03 %</text>
<text x="730" y="15" font-size="10" font-weight="bold" fill="#000" textLength="50" lengthAdjust="spacingAndGlyphs">17 oct 2025</text>
<rect x="785" y="4.500" width="92.500" height="14" rx="3" fill="#c6d8a8" stroke="#a3b585"/>
<text x="787.500" y="15" font-size="10" fill="#111" textLength="88" lengthAdjust="spacingAndGlyphs">EEUU 500 Cash (1€)</text>
<path d="M1856 14a5 5 0 0 1 7-7" fill="none" stroke="#e02020" stroke-width="2"/><path d="M1855 10l1 5 4-2z" fill="#e02020"/><path d="M1866 8a5 5 0 0 1-7 8" fill="none" stroke="#20b020" stroke-width="2"/><path d="M1867 12l-1-6-4 3z" fill="#20b020"/>
<path d="M1875 15h8" stroke="#7a8f9a" stroke-width="2"/>
<path d="M1889 8.500h6v6h-6zM1891 8V6h6v6h-2" fill="none" stroke="#7a8f9a"/>
<path d="M1904 7l7 7M1911 7l-7 7" stroke="#7a8f9a" stroke-width="2"/>

<!-- LEGEND ROW -->
<rect x="28" y="23" width="552" height="14.500" fill="#bdd0da"/>
<path d="M28 37.500H580M579.500 23V38M105.500 23V38M121.500 23V38M186.500 23V38M323.500 23V38M438.500 23V38M58.500 23V38" stroke="#7f98a5"/>
<rect x="30.500" y="25.500" width="10.500" height="10.500" fill="#eee" stroke="#999"/><path d="M34 27h3.500v4h2l-3.800 4-3.800-4h2z" fill="#e02020"/>
<rect x="44" y="25.500" width="10.500" height="10.500" fill="#eee" stroke="#999"/><path d="M47.500 35v-4h-2l3.800-4.500 3.800 4.500h-2v4z" fill="#20c020"/>
<rect x="62.500" y="26.500" width="7.500" height="8" fill="#cfdde4" stroke="#889aa4"/><rect x="126.500" y="26.500" width="7.500" height="8" fill="#cfdde4" stroke="#889aa4"/>
<path d="M110 27.500h1.500M110 30.500h1.500M110 33.500h1.500M113 27.500h5M113 30.500h5M113 33.500h5" stroke="#222"/>
<rect x="190.500" y="26" width="8" height="9" fill="#7d8d94"/>
<path d="M328 26h1.500v9H328z" fill="#e000e0"/><path d="M330.500 26h1.500v9h-1.500z" fill="#111"/><path d="M333 26h1.500v9H333z" fill="#e0d000"/><path d="M335 26h1v9h-1z" fill="#00a0e0"/>
<rect x="442.500" y="26" width="8" height="9" fill="#000"/>
<g font-size="10.200" fill="#111">
<text x="74" y="34" textLength="29" lengthAdjust="spacingAndGlyphs">Precio</text>
<text x="138" y="34" textLength="46" lengthAdjust="spacingAndGlyphs">Cierre (W)</text>
<text x="202" y="34" textLength="119" lengthAdjust="spacingAndGlyphs">Tunel Domenec v4 (t t t t t)</text>
<text x="339.500" y="34" textLength="96.500" lengthAdjust="spacingAndGlyphs">Control Total Doc v.6</text>
<text x="454" y="34" textLength="123" lengthAdjust="spacingAndGlyphs">Multi Avisos (3 f 3 1,5 70 f f)</text>
</g>

<!-- LEFT TOOLBAR -->
<rect x="0" y="23" width="28" height="987" fill="#9db6c5"/>
<path d="M27.500 23V1031" stroke="#6f8794"/>
<path d="M10 29l4-3 4 3" fill="none" stroke="#6f8794"/>
<rect x="3.500" y="35.500" width="21" height="22" rx="2" fill="#8ca4b0" stroke="#6d8796"/>
<path d="M11 39l8 7-4 .5 3 6-2 1-3-6-2 3z" fill="#8e9aa2" stroke="#dfe8ec" stroke-width=".8"/>
<g fill="none" stroke="#222" stroke-width="1.200">
<circle cx="13" cy="66" r="4.500"/><path d="M16 70l5 5" stroke-width="2"/>
<circle cx="15" cy="89" r="4.500"/><path d="M18 92l5 5" stroke-width="2"/>
</g>
<rect x="6" y="89" width="11" height="8" fill="none" stroke="#3868d0" stroke-dasharray="2 1"/>
<path d="M9 116c2-2 1-8 5-8s3 6 5 8z M12 117h4v2h-4z" fill="#f0e020" stroke="#a09010" stroke-width=".6"/><path d="M6 106h14" stroke="#111"/><path d="M17 104l5 7-3 0z" fill="#fff" stroke="#555" stroke-width=".5"/>
<path d="M9 138c2-2 1-8 5-8s3 6 5 8z M12 139h4v2h-4z" fill="#f0e020" stroke="#a09010" stroke-width=".6"/>
<path d="M6 160l3-8 3 8h10" fill="none" stroke="#1030e0" stroke-width="1.300"/><path d="M12 156h10" stroke="#e08050" stroke-dasharray="2 1"/><text x="18" y="163" font-size="8" font-weight="bold" fill="#1030e0">F</text>
<path d="M9 178h10M9 181h10" stroke="#e08050"/><text x="18" y="185" font-size="8" font-weight="bold" fill="#1030e0">F</text>
<rect x="9" y="196" width="11" height="8" fill="none" stroke="#3868d0"/><path d="M7 205h3M8.500 203.500v3M18.500 195h3M20 193.500v3" stroke="#1030e0"/>
<rect x="9" y="217" width="11" height="9" fill="#a88a9a" stroke="#d02020"/><path d="M7 227h3M8.500 225.500v3M18.500 216h3M20 214.500v3" stroke="#1030e0"/>
<path d="M10 248l10-10" stroke="#111" stroke-width="2"/><path d="M15 237l6-1-1 6z" fill="#111"/><circle cx="9.500" cy="248.500" r="2" fill="none" stroke="#111"/>
<rect x="8" y="259" width="13" height="13" rx="2" fill="#a8c0d8" stroke="#5888d8"/><text x="14.500" y="270" font-size="10" font-weight="bold" fill="#222" text-anchor="middle">T</text>
<circle cx="14" cy="286" r="6.500" fill="#b8d0dc" stroke="#5888d8"/><text x="14" y="290" font-size="10" font-weight="bold" fill="#108030" text-anchor="middle">T</text>
<path d="M11 313l6-6" stroke="#222"/><circle cx="10" cy="314" r="2" fill="none" stroke="#222"/><circle cx="18" cy="306" r="2" fill="none" stroke="#222"/>
<circle cx="12.500" cy="332" r="1.500" fill="none" stroke="#20a020"/><path d="M14 332h8" stroke="#20b020" stroke-width="1.800"/>
<circle cx="12.500" cy="354" r="1.500" fill="none" stroke="#e02020"/><path d="M14 354h8" stroke="#e02020" stroke-width="1.800"/>
<path d="M7 379l13-9 3 4-13 9z" fill="#9aa8b0" stroke="#555"/>
<rect x="6" y="391" width="17" height="14" fill="#b4c0c8"/><path d="M6 391h17M6 405h17" stroke="#60a060" stroke-dasharray="1 1"/><path d="M7 402l4-5 4 3 4-6 3 3" fill="none" stroke="#4060d0"/>
<ellipse cx="14" cy="420" rx="7" ry="5" fill="#a88a9a" stroke="#e02020" stroke-width="1.300"/><ellipse cx="14" cy="442" rx="7" ry="5" fill="#a8886a" stroke="#905010" stroke-width="1.300"/><ellipse cx="14" cy="464" rx="7" ry="5" fill="#80a880" stroke="#108010" stroke-width="1.300"/><ellipse cx="14" cy="486" rx="7" ry="5" fill="#80e080" stroke="#10e010" stroke-width="1.300"/>
<path d="M7 425h3M8.500 423.500v3M20 415h3M21.500 413.500v3M7 447h3M8.500 445.500v3M20 437h3M21.500 435.500v3M7 469h3M8.500 467.500v3M20 459h3M21.500 457.500v3M7 491h3M8.500 489.500v3M20 481h3M21.500 479.500v3" stroke="#1030e0"/>
<path d="M5 517l18-18" stroke="#111" stroke-width="1.100"/><path d="M5 547l18-21" stroke="#30b030" stroke-width="1.300"/><path d="M5 562l18-18" stroke="#e82020" stroke-width="1.300"/>
<path d="M5 574.500h18" stroke="#111"/><path d="M5 596h18" stroke="#ff9a90" stroke-width="2"/><path d="M5 618h18" stroke="#10e010" stroke-width="2"/><path d="M5 640h18" stroke="#108010" stroke-width="2"/><path d="M5 662h18" stroke="#f01010" stroke-width="2"/><path d="M5 684h18" stroke="#6898f0" stroke-width="2"/><path d="M5 706h18" stroke="#1010a0" stroke-width="2"/><path d="M14.500 719v18" stroke="#111"/>
<path d="M7 749h15M7 749l9-14" stroke="#e07070" fill="none"/><text x="15" y="746" font-size="7" fill="#1030e0">α</text>
<circle cx="14" cy="770" r="6" fill="none" stroke="#e08050"/><path d="M11 770h6M14 767v6M17 762h5M19.500 759.500v5" stroke="#1030e0"/>
<text x="5" y="789" font-size="7" font-weight="bold" fill="#1030e0" textLength="20">3+5+</text><text x="8" y="798" font-size="7" font-weight="bold" fill="#1030e0" textLength="17">+2+4</text>
<path d="M6 781l7 17" stroke="#3060e0"/>
<text x="11" y="813" font-size="7" font-weight="bold" fill="#1030e0">+b</text><text x="5" y="823" font-size="7" font-weight="bold" fill="#1030e0">a+ c+</text>
<path d="M7 836l5 5 9-12" fill="none" stroke="#40b040" stroke-width="3.500"/>
<path d="M8 857h4l3-8 3 1-1 6h5l-2 10H8z" fill="#40b040" stroke="#207020" stroke-width=".5"/>
<path d="M8 876l12 12M20 876L8 888" stroke="#e81010" stroke-width="4.500"/>
<path d="M14 897l8 15H6z" fill="#f0b020" stroke="#c08010"/><path d="M14 902v6M14 909v2" stroke="#604010" stroke-width="1.500"/>
<path d="M14 919l5 6h-3v7h-4v-7H9z" fill="#30a040" stroke="#107020" stroke-width=".6"/>
<path d="M12 941h4v3h-4z" fill="#e02020"/>
<rect x="1" y="945" width="26" height="11.500" fill="#b0c8d4"/><path d="M1 945H27M1 956.500H27" stroke="#8098a4"/><path d="M11 949l3 3 3-3" fill="none" stroke="#222" stroke-width="1.200"/>
<circle cx="9" cy="963" r="3.500" fill="#208030"/><path d="M9 966h9l4 4v9H9z" fill="#e8eef0" stroke="#8a9aa2"/><path d="M13 974l7 7" stroke="#333" stroke-width="2"/>
<path d="M8 997h2M13 997h2M18 997h2" stroke="#222" stroke-width="2.500"/><path d="M13 1001h6l-3 3z" fill="#222"/>

<!-- BOTTOM BAR -->
<rect x="0" y="1010" width="1915" height="21" fill="#9bb5c4"/>
<path d="M0 1010.500H1915" stroke="#6f8794" stroke-width="1.500"/>
<path d="M6 1028l3-12 4 8 4-6" fill="none" stroke="#405060"/><path d="M14 1029l6-12 3 2-6 12z" fill="#e8c040" stroke="#806010" stroke-width=".5"/>
<path d="M42 1015l-7 5 7 6" fill="none" stroke="#fff" stroke-width="1.200"/><circle cx="34" cy="1020" r="2.200" fill="#fff"/><circle cx="43" cy="1015" r="2.200" fill="#fff"/><circle cx="43" cy="1026" r="2.200" fill="#fff"/>
<rect x="54" y="1014" width="12" height="11" fill="#eef" stroke="#6a8"/><rect x="56" y="1018" width="10" height="8" rx="1" fill="#3088e0"/>
<rect x="76" y="1014" width="9" height="13" fill="#eee" stroke="#555"/><path d="M78 1017h5" stroke="#e02020"/><path d="M78 1020h5M78 1023h5" stroke="#208030"/>
<path d="M97 1014h8M97 1018h8M97 1022h8M97 1026h8" stroke="#20a040" stroke-width="2"/><path d="M101 1013v15" stroke="#e02020" stroke-width="1.500"/>
<rect x="115" y="1014" width="9" height="9" fill="#e8f0f4" stroke="#2060a0"/><rect x="119" y="1018" width="9" height="9" fill="#e8f0f4" stroke="#2060a0"/>
<text x="135" y="1025" font-size="11" fill="#556">«</text>
<rect x="148.500" y="1015.500" width="12" height="11" rx="1" fill="#c0d6e0" stroke="#7b97a6"/><path d="M156 1018l-3 3 3 3" fill="none" stroke="#222" stroke-width="1.100"/>
<rect x="161" y="1015.500" width="359" height="11" fill="#a5bfcd"/>
<rect x="520" y="1015.500" width="1232" height="11" fill="url(#bar)" stroke="#8ea8b5"/>
<rect x="1752.500" y="1015.500" width="12.500" height="11" rx="1" fill="#c0d6e0" stroke="#7b97a6"/><path d="M1757 1018l3 3-3 3" fill="none" stroke="#222" stroke-width="1.100"/>
<path d="M1784 1027c2-5-1-10-8-9M1778 1014l-4 4 4 4" fill="none" stroke="#1c6fd0" stroke-width="1.800"/>
<path d="M1795 1027c-2-5 1-10 8-9M1801 1014l4 4-4 4" fill="none" stroke="#8cb0d0" stroke-width="1.800"/>
<path d="M1818 1027l5-4 4-8 4 2-3 6 2 4-3 1z" fill="#e8eef0" stroke="#c02020"/><path d="M1824 1014v8M1828 1013v8" stroke="#20a020"/>
<circle cx="1842" cy="1019" r="5" fill="#e8eef0" stroke="#222" stroke-width="1.300"/><path d="M1846 1023l3 4" stroke="#222" stroke-width="2"/><path d="M1851 1015v9M1849 1017l2-2 2 2M1849 1022l2 2 2-2M1838 1028h8" stroke="#1050c0"/>
<circle cx="1864" cy="1019" r="5" fill="#e8eef0" stroke="#222" stroke-width="1.300"/><path d="M1868 1023l4 4" stroke="#222" stroke-width="2"/><path d="M1861.500 1019h5" stroke="#1050c0" stroke-width="1.500"/>
<circle cx="1886" cy="1019" r="5" fill="#e8eef0" stroke="#222" stroke-width="1.300"/><path d="M1890 1023l4 4" stroke="#222" stroke-width="2"/><path d="M1883.500 1019h5M1886 1016.500v5" stroke="#1050c0" stroke-width="1.500"/>
<path d="M1903 1015h10" stroke="#333" stroke-dasharray="1 1" stroke-width="2"/><path d="M1908 1017v7M1905 1021l3 4 3-4" fill="none" stroke="#1870d0" stroke-width="1.500"/>
</svg>
</body></html>
